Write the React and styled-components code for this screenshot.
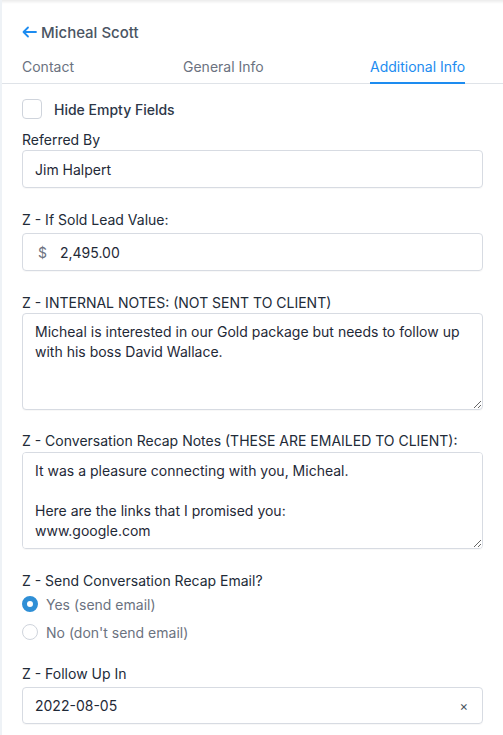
import React from 'react';
import styled, { createGlobalStyle } from 'styled-components';

const GlobalStyle = createGlobalStyle`
  html, body {
    margin: 0;
    padding: 0;
    background: #fff;
  }
  body {
    font-family: Inter, 'Noto Sans', sans-serif;
    -webkit-font-smoothing: antialiased;
  }
`;

const blue = '#1d8cf0';
const border = '#d7dbe2';

const Page = styled.div`
  width: 503px;
  height: 735px;
  box-sizing: border-box;
  background: #fff;
  border-left: 2px solid #eef2f6;
  box-shadow: inset 0 4px 3px -2px rgba(0, 0, 0, 0.08);
  overflow: hidden;
`;

const Header = styled.div`
  padding: 22px 0 0 20px;
  height: 20px;
  display: flex;
  align-items: center;
  gap: 4px;
  color: #4b5563;
  font-size: 15px;
  font-weight: 500;
`;

const Tabs = styled.div`
  margin-top: 10px;
  display: grid;
  grid-template-columns: 161px 187px auto;
  padding-left: 20px;
  border-bottom: 1px solid #dfe3e8;
`;

const Tab = styled.div`
  justify-self: start;
  height: 32px;
  box-sizing: border-box;
  display: flex;
  align-items: center;
  font-size: 14px;
  color: ${({ active }) => (active ? blue : '#6b7280')};
  border-bottom: 2px solid ${({ active }) => (active ? blue : 'transparent')};
  margin-bottom: -1px;
  padding-bottom: 1px;
`;

const Body = styled.div`
  padding: 0 20px 0 20px;
`;

const CheckRow = styled.label`
  margin-top: 15px;
  height: 20px;
  display: flex;
  align-items: center;
  gap: 12px;
  font-size: 14px;
  font-weight: 500;
  color: #2d3748;
`;

const CheckBox = styled.span`
  width: 18px;
  height: 18px;
  border: 1px solid #cfd4dc;
  border-radius: 4px;
  background: #fff;
`;

const Label = styled.div`
  margin-top: ${({ top }) => top}px;
  margin-bottom: ${({ gap }) => gap || 0}px;
  height: 20px;
  line-height: 20px;
  font-size: 14px;
  font-weight: 400;
  color: #222b38;
`;

const InputBox = styled.div`
  height: ${({ h }) => h || 38}px;
  box-sizing: border-box;
  border: 1px solid ${border};
  border-radius: 4px;
  display: flex;
  align-items: center;
  padding: 0 12px;
  gap: 10px;
  font-size: 14px;
  color: #1f2937;
  box-shadow: 0 1px 1px rgba(0, 0, 0, 0.03);
`;

const Prefix = styled.span`
  color: #6b7280;
  padding-left: 3px;
  margin-right: 3px;
`;

const Value = styled.span`
  flex: 1;
`;

const Clear = styled.span`
  color: #4b5563;
  font-size: 13px;
  margin-right: 2px;
`;

const TextArea = styled.textarea`
  display: block;
  width: 100%;
  height: 97px;
  box-sizing: border-box;
  border: 1px solid ${border};
  border-radius: 4px;
  padding: 8px 12px;
  font-family: Inter, 'Noto Sans', sans-serif;
  font-size: 14px;
  line-height: 20px;
  color: #1f2937;
  resize: vertical;
  outline: none;
  box-shadow: 0 1px 1px rgba(0, 0, 0, 0.03);
`;

const RadioRow = styled.div`
  margin-top: ${({ top }) => top}px;
  height: 20px;
  display: flex;
  align-items: center;
  gap: 8px;
  font-size: 14px;
  color: #6b7280;
`;

const RadioDot = styled.span`
  width: 16px;
  height: 16px;
  box-sizing: border-box;
  border-radius: 50%;
  border: ${({ checked }) => (checked ? `5px solid #2f8fd6` : '1px solid #cfd4dc')};
  background: #fff;
`;

const BackArrow = () => (
  <svg width="15" height="12" viewBox="0 0 15 12" fill="none" stroke={blue} strokeWidth="1.8" strokeLinecap="round" strokeLinejoin="round">
    <path d="M14 6H2" />
    <path d="M6 1.5 1.5 6 6 10.5" />
  </svg>
);

export default function App() {
  return (
    <>
      <GlobalStyle />
      <Page>
        <Header>
          <BackArrow />
          <span>Micheal Scott</span>
        </Header>
        <Tabs>
          <Tab>Contact</Tab>
          <Tab>General Info</Tab>
          <Tab active>Additional Info</Tab>
        </Tabs>
        <Body>
          <CheckRow>
            <CheckBox />
            Hide Empty Fields
          </CheckRow>

          <Label top={11}>Referred By</Label>
          <InputBox>Jim Halpert</InputBox>

          <Label top={22} gap={3}>Z - If Sold Lead Value:</Label>
          <InputBox>
            <Prefix>$</Prefix>
            <Value>2,495.00</Value>
          </InputBox>

          <Label top={22}>Z - INTERNAL NOTES: (NOT SENT TO CLIENT)</Label>
          <TextArea
            readOnly
            defaultValue="Micheal is interested in our Gold package but needs to follow up with his boss David Wallace."
          />

          <Label top={21} gap={1}>Z - Conversation Recap Notes (THESE ARE EMAILED TO CLIENT):</Label>
          <TextArea
            readOnly
            defaultValue={'It was a pleasure connecting with you, Micheal.\n\nHere are the links that I promised you:\nwww.google.com'}
          />

          <Label top={22}>Z - Send Conversation Recap Email?</Label>
          <RadioRow top={3}>
            <RadioDot checked />
            Yes (send email)
          </RadioRow>
          <RadioRow top={8}>
            <RadioDot />
            No (don't send email)
          </RadioRow>

          <Label top={22} gap={3}>Z - Follow Up In</Label>
          <InputBox h={37}>
            <Value>2022-08-05</Value>
            <Clear>×</Clear>
          </InputBox>
        </Body>
      </Page>
    </>
  );
}
